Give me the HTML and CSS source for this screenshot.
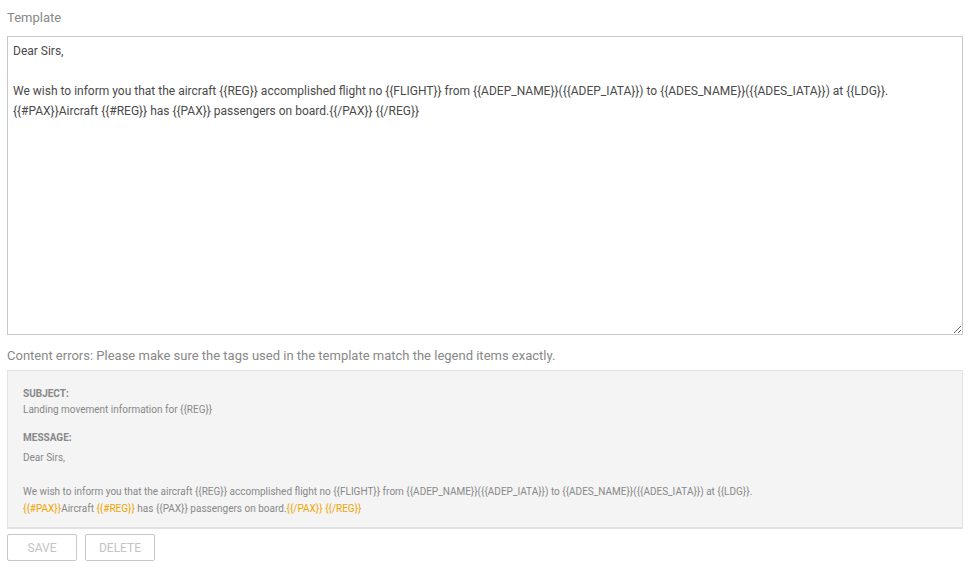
FILE: index.html
```html
<!DOCTYPE html>
<html lang="en">
<head>
  <meta charset="UTF-8">
  <title>Template</title>
  <link rel="stylesheet" href="styles.css">
</head>
<body>
  <div class="editor">
    <label class="field-label" for="tpl">Template</label>
    <textarea id="tpl" class="template-input">Dear Sirs,

We wish to inform you that the aircraft {{REG}} accomplished flight no {{FLIGHT}} from {{ADEP_NAME}}({{ADEP_IATA}}) to {{ADES_NAME}}({{ADES_IATA}}) at {{LDG}}.
{{#PAX}}Aircraft {{#REG}} has {{PAX}} passengers on board.{{/PAX}} {{/REG}}</textarea>

    <div class="errors">Content errors: Please make sure the tags used in the template match the legend items exactly.</div>

    <div class="preview">
      <div class="preview-title">Subject:</div>
      <div class="preview-text">Landing movement information for {{REG}}</div>

      <div class="preview-title msg">Message:</div>
      <div class="preview-text body">Dear Sirs,<br><br>We wish to inform you that the aircraft {{REG}} accomplished flight no {{FLIGHT}} from {{ADEP_NAME}}({{ADEP_IATA}}) to {{ADES_NAME}}({{ADES_IATA}}) at {{LDG}}.<br><span class="tag">{{#PAX}}</span>Aircraft <span class="tag">{{#REG}}</span> has {{PAX}} passengers on board.<span class="tag">{{/PAX}}</span> <span class="tag">{{/REG}}</span></div>
    </div>

    <div class="actions">
      <button class="btn" disabled>Save</button>
      <button class="btn" disabled>Delete</button>
    </div>
  </div>
</body>
</html>
```

FILE: styles.css
```css
* {
  box-sizing: border-box;
}
body {
  margin: 0;
  padding: 0 7px;
  font-family: Roboto, 'Liberation Sans', sans-serif;
  background: #fff;
  color: #333;
}
.editor {
  display: flex;
  flex-direction: column;
}
.field-label {
  font-size: 13px;
  color: #888;
  line-height: 16px;
  padding-top: 10px;
  margin-bottom: 10px;
}
.template-input {
  display: block;
  width: 956px;
  height: 299px;
  border: 1px solid #c8c8c8;
  border-radius: 0;
  padding: 4px 5px;
  font-family: Roboto, 'Liberation Sans', sans-serif;
  font-size: 12px;
  line-height: 20px;
  color: #4a4a4a;
  resize: both;
  outline: none;
}
.errors {
  font-size: 13px;
  color: #888;
  line-height: 16px;
  margin-top: 13px;
  margin-bottom: 6px;
}
.preview {
  width: 956px;
  background: #f4f4f4;
  border: 1px solid #e2e2e2;
  border-bottom-width: 2px;
  padding: 16px 15px 6px;
  color: #888;
  font-size: 10px;
}
.preview-title {
  font-weight: bold;
  text-transform: uppercase;
  line-height: 14px;
}
.preview-title.msg {
  margin-top: 13px;
}
.preview-text {
  line-height: 17px;
  margin-bottom: 4px;
}
.preview-text.body {
  margin-top: 4px;
}
.tag {
  color: #f0a500;
}
.actions {
  display: flex;
  gap: 8px;
  margin-top: 5px;
}
.btn {
  width: 70px;
  height: 27px;
  background: #fff;
  border: 1px solid #c8c8c8;
  border-radius: 2px;
  font-family: Roboto, 'Liberation Sans', sans-serif;
  font-size: 12px;
  text-transform: uppercase;
  color: #c4c4c4;
  padding: 0;
}
```
